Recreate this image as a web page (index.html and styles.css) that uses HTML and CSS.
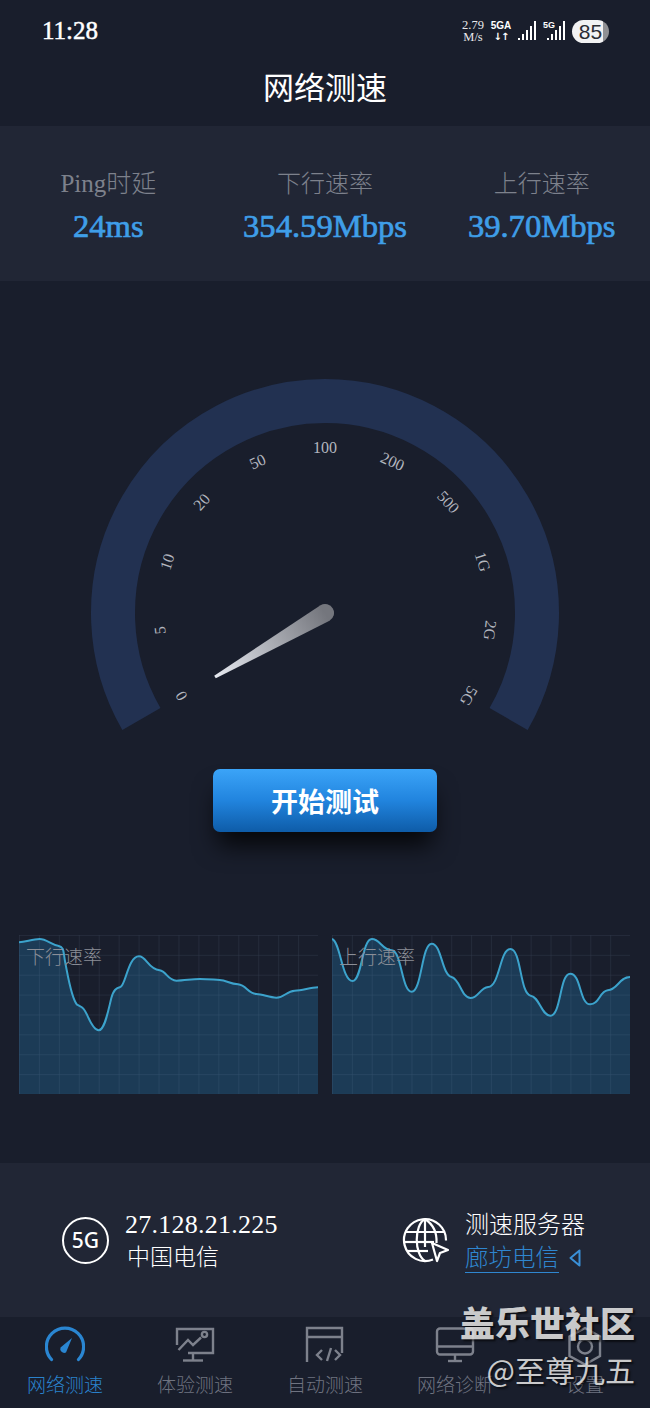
FILE: index.html
```html
<!DOCTYPE html>
<html lang="zh">
<head>
<meta charset="utf-8">
<title>网络测速</title>
<link rel="stylesheet" href="styles.css">
</head>
<body>
<div class="phone">
  <header class="status">
    <span class="time">11:28</span>
    <div class="status-right">
      <span class="net"><span>2.79</span><span>M/s</span></span>
      <span class="sim"><span class="sim-name">5GA</span><span class="sim-arrows">↓↑</span></span>
      <svg class="sig" viewBox="0 0 18 20"><g fill="#fff"><rect x="0" y="17" width="2" height="2"/><rect x="4" y="13" width="2" height="6"/><rect x="8" y="9" width="2" height="10"/><rect x="12" y="5" width="2" height="14"/><rect x="16" y="0" width="2" height="19"/></g></svg>
      <span class="sig2"><span class="sig2-name">5G</span><svg class="sig2-bars" viewBox="0 0 18 20"><g fill="#fff"><rect x="0" y="17" width="2" height="2"/><rect x="4" y="13" width="2" height="6"/><rect x="8" y="9" width="2" height="10"/><rect x="12" y="5" width="2" height="14"/><rect x="16" y="0" width="2" height="19"/></g></svg></span>
      <span class="battery">85</span>
    </div>
  </header>
  <h1 class="title">网络测速</h1>

  <section class="stats">
    <div class="stat"><div class="stat-label">Ping时延</div><div class="stat-value">24ms</div></div>
    <div class="stat"><div class="stat-label">下行速率</div><div class="stat-value">354.59Mbps</div></div>
    <div class="stat"><div class="stat-label">上行速率</div><div class="stat-value">39.70Mbps</div></div>
  </section>

  <section class="gauge-wrap">
    <svg class="gauge" viewBox="0 370 650 370">
      <defs>
        <linearGradient id="needle" gradientUnits="userSpaceOnUse" x1="215" y1="677" x2="325" y2="613">
          <stop offset="0" stop-color="#e6e9f0"/>
          <stop offset="1" stop-color="#74767d"/>
        </linearGradient>
      </defs>
      <path class="gauge-arc" d="M141.4 719 A212 212 0 1 1 508.6 719"/>
      <g class="gauge-labels">
        <text x="325" y="447" transform="rotate(-120 325 613)">0</text>
        <text x="325" y="447" transform="rotate(-96 325 613)">5</text>
        <text x="325" y="447" transform="rotate(-72 325 613)">10</text>
        <text x="325" y="447" transform="rotate(-48 325 613)">20</text>
        <text x="325" y="447" transform="rotate(-24 325 613)">50</text>
        <text x="325" y="447">100</text>
        <text x="325" y="447" transform="rotate(24 325 613)">200</text>
        <text x="325" y="447" transform="rotate(48 325 613)">500</text>
        <text x="325" y="447" transform="rotate(72 325 613)">1G</text>
        <text x="325" y="447" transform="rotate(96 325 613)">2G</text>
        <text x="325" y="447" transform="rotate(120 325 613)">5G</text>
      </g>
      <path fill="url(#needle)" d="M214.2 675.7 L320.5 605.2 A9 9 0 0 1 329.5 620.8 L215.8 678.3 Z"/>
    </svg>
  </section>

  <div class="btn-row"><button class="start">开始测试</button></div>

  <section class="charts">
    <div class="chart chart-down">
      <svg viewBox="58 46 897 477" preserveAspectRatio="none">
        <defs>
          <pattern id="gridA" x="58" y="46" width="59.8" height="59.6" patternUnits="userSpaceOnUse">
            <path d="M0 59.6V0H59.8" class="grid-line"/>
          </pattern>
        </defs>
        <path class="fill" d="M58 68 C80 66 100 58 120 58 C140 58 155 75 175 78 C195 82 190 95 197 130 C205 170 215 235 232 255 C250 265 250 262 262 285 C275 315 285 332 297 332 C315 332 325 275 335 235 C342 210 350 205 362 202 C378 198 385 110 418 110 C440 110 445 148 480 152 C500 155 505 183 530 183 C555 183 575 178 600 178 C625 178 640 180 660 181 C680 182 690 192 715 194 C740 196 745 222 770 223 C790 224 810 234 830 234 C855 234 860 214 885 213 C910 212 930 204 955 203 V523 H58 Z"/>
        <rect x="58" y="46" width="897" height="477" fill="url(#gridA)"/>
        <path class="line" d="M58 68 C80 66 100 58 120 58 C140 58 155 75 175 78 C195 82 190 95 197 130 C205 170 215 235 232 255 C250 265 250 262 262 285 C275 315 285 332 297 332 C315 332 325 275 335 235 C342 210 350 205 362 202 C378 198 385 110 418 110 C440 110 445 148 480 152 C500 155 505 183 530 183 C555 183 575 178 600 178 C625 178 640 180 660 181 C680 182 690 192 715 194 C740 196 745 222 770 223 C790 224 810 234 830 234 C855 234 860 214 885 213 C910 212 930 204 955 203"/>
      </svg>
      <span class="chart-label">下行速率</span>
    </div>
    <div class="chart chart-up">
      <svg viewBox="20 46 897 477" preserveAspectRatio="none">
        <defs>
          <pattern id="gridB" x="20" y="46" width="59.8" height="59.6" patternUnits="userSpaceOnUse">
            <path d="M0 59.6V0H59.8" class="grid-line"/>
          </pattern>
        </defs>
        <path class="fill" d="M20 58 C45 65 50 184 82 184 C110 184 110 58 140 58 C165 58 170 90 200 92 C230 95 230 216 260 216 C290 216 290 72 320 72 C350 72 350 165 380 172 C405 178 410 235 437 235 C460 235 465 205 490 202 C525 200 525 88 557 88 C590 88 585 222 618 228 C645 232 650 288 677 288 C710 288 705 162 737 162 C770 162 765 254 797 254 C825 254 825 215 850 212 C880 210 885 172 917 172 V523 H20 Z"/>
        <rect x="20" y="46" width="897" height="477" fill="url(#gridB)"/>
        <path class="line" d="M20 58 C45 65 50 184 82 184 C110 184 110 58 140 58 C165 58 170 90 200 92 C230 95 230 216 260 216 C290 216 290 72 320 72 C350 72 350 165 380 172 C405 178 410 235 437 235 C460 235 465 205 490 202 C525 200 525 88 557 88 C590 88 585 222 618 228 C645 232 650 288 677 288 C710 288 705 162 737 162 C770 162 765 254 797 254 C825 254 825 215 850 212 C880 210 885 172 917 172"/>
      </svg>
      <span class="chart-label">上行速率</span>
    </div>
  </section>

  <section class="info">
    <div class="info-item info-left">
      <span class="badge5g">5G</span>
      <div class="info-text">
        <div class="ip">27.128.21.225</div>
        <div class="carrier">中国电信</div>
      </div>
    </div>
    <div class="info-item info-right">
      <svg class="globe" viewBox="0 0 48 48">
        <g class="globe-lines">
          <path d="M32 43.5 A21 21 0 1 1 45 24.5"/>
          <path d="M24 3 C13 9 13 38 24 45"/>
          <path d="M24 3 C33 9 36 18 35.5 27"/>
          <path d="M24 3 V31"/>
          <path d="M5 16 H43"/>
          <path d="M3 26 H33"/>
          <path d="M6 35 H27"/>
          <path d="M31 27 L47 34 L39 37 L36 45 Z"/>
        </g>
      </svg>
      <div class="info-text">
        <div class="server-title">测速服务器</div>
        <div class="server-row"><span class="server-link">廊坊电信</span>
          <svg class="tri" viewBox="0 0 12 18"><path d="M10.5 1.5 V16.5 L1.5 9 Z"/></svg>
        </div>
      </div>
    </div>
  </section>

  <nav class="nav">
    <div class="nav-item active">
      <svg viewBox="0 0 40 40"><path class="ic-arc" d="M6.5 34.5 A18.6 18.6 0 1 1 33.5 34.5"/><path class="ic-fill" d="M15.5 22.5 L27 13 L21 27.5 A4 4 0 0 1 15.5 22.5Z"/></svg>
      <span>网络测速</span>
    </div>
    <div class="nav-item">
      <svg viewBox="0 0 40 40"><g class="ic"><path d="M2 20 V4 H38 V28 H13"/><path d="M3.5 25 L13 15 L18 20 L26 12.5"/><circle cx="29.5" cy="9.5" r="2.6"/><path d="M18 28 V35"/><path d="M8 35.5 H28"/></g></svg>
      <span>体验测速</span>
    </div>
    <div class="nav-item">
      <svg viewBox="0 0 40 40"><g class="ic"><path d="M2 37 V3 H37 V28"/><path d="M2 12 H37"/><path d="M17 25 L12 30 L17 35"/><path d="M26 23 L22 36"/><path d="M30 25 L35 30 L30 35"/></g></svg>
      <span>自动测速</span>
    </div>
    <div class="nav-item">
      <svg viewBox="0 0 40 40"><g class="ic"><rect x="2" y="3.5" width="36" height="26" rx="3"/><path d="M2 21.5 H38"/><path d="M20 30 V36"/><path d="M13 36 H27"/></g></svg>
      <span>网络诊断</span>
    </div>
    <div class="nav-item">
      <svg viewBox="0 0 40 40"><g class="ic"><path d="M20 3 L35 11.5 V31 L20 39.5 L4.5 31 V11.5 Z"/><circle cx="20" cy="21.5" r="7"/></g></svg>
      <span>设置</span>
    </div>
  </nav>

  <div class="watermark">
    <div class="wm-main">盖乐世社区</div>
    <div class="wm-sub">@至尊九五</div>
  </div>
</div>
</body>
</html>
```
FILE: styles.css
```css
* { box-sizing: border-box; }
html, body { margin: 0; padding: 0; }
body {
  background: #191e2c;
  font-family: "Liberation Serif", "Noto Sans CJK SC", serif;
  color: #fff;
}
.phone {
  position: relative;
  width: 650px;
  height: 1408px;
  overflow: hidden;
  display: flex;
  flex-direction: column;
}

/* status bar */
.status {
  height: 62px;
  display: flex;
  align-items: center;
  justify-content: space-between;
  padding: 0 41px 0 42px;
}
.time { font-size: 25px; -webkit-text-stroke: 0.5px #fff; }
.status-right { display: flex; align-items: center; gap: 7px; }
.net {
  display: flex;
  flex-direction: column;
  align-items: center;
  width: 24px;
  font-size: 12.5px;
  line-height: 12px;
  color: #e8e8ea;
}
.sim {
  display: flex;
  flex-direction: column;
  align-items: center;
  width: 18px;
  font-family: "Liberation Sans", sans-serif;
  font-weight: 700;
  font-size: 10px;
  line-height: 11px;
}
.sim-arrows { font-family: "DejaVu Sans", sans-serif; font-size: 10px; letter-spacing: -1px; }
.sig { width: 18px; height: 20px; margin-left: 1px; }
.sig2 { position: relative; width: 22px; height: 20px; }
.sig2-name {
  position: absolute;
  left: 0;
  top: -1px;
  font-family: "Liberation Sans", sans-serif;
  font-weight: 700;
  font-size: 9px;
  line-height: 10px;
}
.sig2-bars { position: absolute; right: 0; top: 0; width: 18px; height: 20px; }
.battery {
  width: 37px;
  height: 23px;
  border-radius: 12px;
  background: linear-gradient(90deg, #f2f2f3 0, #f2f2f3 85%, #8f9094 85%);
  color: #2a2c33;
  font-family: "Liberation Sans", sans-serif;
  font-size: 21px;
  line-height: 23px;
  text-align: center;
}

.title {
  margin: 0;
  height: 64px;
  padding-top: 1px;
  padding-bottom: 11px;
  font-size: 31px;
  line-height: 52px;
  font-weight: 400;
  text-align: center;
}

/* stats */
.stats {
  height: 155px;
  background: #212635;
  display: grid;
  grid-template-columns: repeat(3, 1fr);
  padding-top: 43px;
}
.stat { text-align: center; }
.stat-label { font-size: 24px; line-height: 30px; color: #7d818c; font-weight: 300; }
.stat:first-child .stat-label { font-size: 25px; }
.stat-value {
  margin-top: 7px;
  font-size: 32.6px;
  line-height: 40px;
  color: #3f9ee8;
  -webkit-text-stroke: 0.7px #3f9ee8;
}

/* gauge */
.gauge-wrap { margin-top: 89px; height: 370px; }
.gauge { display: block; width: 650px; height: 370px; }
.gauge-arc { fill: none; stroke: #223151; stroke-width: 44; }
.gauge-labels text {
  fill: #b3b6bf;
  font-size: 16px;
  text-anchor: middle;
  dominant-baseline: central;
}

/* button */
.btn-row { margin-top: 29px; display: flex; justify-content: center; }
.start {
  width: 224px;
  height: 63px;
  border: 0;
  border-radius: 7px;
  background: linear-gradient(180deg, #3ba4f8 0%, #2184de 50%, #0e5ca8 100%);
  box-shadow: 0 18px 24px -5px rgba(0, 0, 0, 0.8);
  color: #fff;
  font-family: "Noto Sans CJK SC", sans-serif;
  font-size: 27px;
  font-weight: 700;
  padding: 0;
}

/* charts */
.charts {
  margin-top: 103px;
  padding-left: 19px;
  display: flex;
  gap: 14px;
}
.chart { position: relative; width: 299px; height: 159px; }
.chart-up { width: 298px; }
.chart svg { display: block; width: 100%; height: 100%; }
.grid-line { fill: none; stroke: rgba(150, 175, 205, 0.17); stroke-width: 3; }
.fill { fill: #1c3b56; }
.line { fill: none; stroke: #3ca3cc; stroke-width: 6; }
.chart-label {
  position: absolute;
  left: 7px;
  top: 11px;
  font-size: 19px;
  line-height: 24px;
  color: #8b8e97;
  font-weight: 300;
}

/* info */
.info {
  margin-top: 69px;
  height: 154px;
  background: #212635;
  display: flex;
  padding-left: 62px;
}
.info-item { display: flex; align-items: center; }
.info-left { width: 339px; gap: 16px; }
.info-right { gap: 16px; }
.badge5g {
  width: 47px;
  height: 47px;
  border-radius: 50%;
  border: 2px solid #fff;
  display: flex;
  align-items: center;
  justify-content: center;
  font-family: "Noto Sans", sans-serif;
  font-size: 21px;
  font-weight: 500;
}
.info-text { padding-top: 4px; }
.ip { font-size: 26px; line-height: 32px; letter-spacing: 0.25px; }
.carrier { font-size: 23px; line-height: 34px; margin-left: 2px; font-weight: 300; }
.globe { width: 48px; height: 48px; }
.globe-lines { fill: none; stroke: #fff; stroke-width: 2.2; stroke-linejoin: round; }
.server-title { font-size: 24px; line-height: 32px; font-weight: 300; }
.server-row { display: flex; align-items: center; gap: 10px; height: 34px; }
.server-link {
  font-size: 23.5px;
  line-height: 28px;
  color: #2f86d0;
  border-bottom: 1.5px solid #2f86d0;
  font-weight: 300;
}
.tri { width: 12px; height: 18px; }
.tri path { fill: none; stroke: #3a90d8; stroke-width: 2; stroke-linejoin: round; }

/* nav */
.nav {
  height: 91px;
  display: grid;
  grid-template-columns: repeat(5, 1fr);
  padding-top: 8px;
}
.nav-item {
  display: flex;
  flex-direction: column;
  align-items: center;
  font-size: 19px;
  color: #6f7380;
  font-weight: 300;
}
.nav-item svg { width: 40px; height: 40px; }
.nav-item span { margin-top: 9px; line-height: 24px; }
.nav-item.active { color: #2a82cc; }
.ic { fill: none; stroke: #7d818c; stroke-width: 2.4; }
.ic-arc { fill: none; stroke: #2a86d2; stroke-width: 3.2; stroke-linecap: round; }
.ic-fill { fill: #2a86d2; }

/* watermark */
.watermark {
  position: absolute;
  right: 15px;
  top: 1300px;
  text-align: right;
  color: rgba(228, 228, 228, 0.88);
  font-family: "Noto Sans CJK SC", sans-serif;
  text-shadow: 2px 2px 2px rgba(0, 0, 0, 0.6);
}
.wm-main { font-size: 35px; line-height: 44px; font-weight: 900; }
.wm-sub { font-size: 30px; line-height: 44px; margin-top: 3px; font-weight: 400; }
```
